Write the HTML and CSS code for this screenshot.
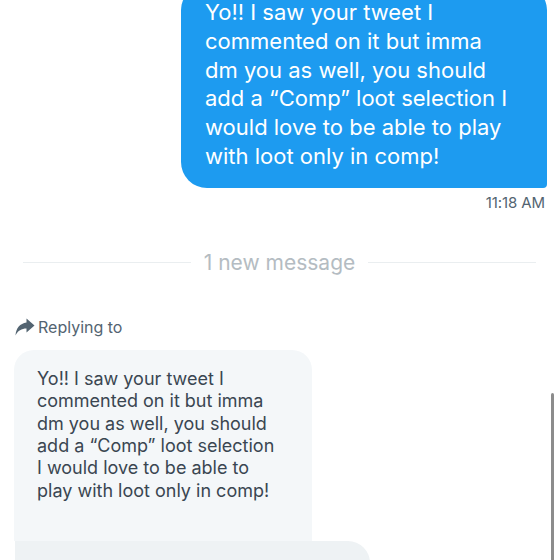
FILE: index.html
```html
<!DOCTYPE html>
<html>
<head>
<meta charset="utf-8">
<link rel="stylesheet" href="styles.css">
</head>
<body>
<div class="chat">
  <div class="out">Yo!! I saw your tweet I commented on it but imma dm you as well, you should add a “Comp” loot selection I would love to be able to play with loot only in comp!</div>
  <div class="time">11:18 AM</div>
  <div class="divider"><span class="line"></span><span class="label">1 new message</span><span class="line"></span></div>
  <div class="reply">
    <svg class="reply-icon" viewBox="0 0 20 18" width="20" height="18"><path d="M11.5 0.5 L19.5 7.5 L11.5 14.5 L11.5 10.5 C6.5 10.5 3 12.5 0.5 17.5 C1 10 5 5.5 11.5 4.5 Z" fill="#536471"/></svg>
    <span>Replying to</span>
  </div>
  <div class="quoted">Yo!! I saw your tweet I commented on it but imma dm you as well, you should add a “Comp” loot selection I would love to be able to play with loot only in comp!</div>
  <div class="next"></div>
</div>
<div class="scrollbar"></div>
</body>
</html>
```
FILE: styles.css
```css
html, body {
  margin: 0;
  height: 560px;
  overflow: hidden;
  background: #ffffff;
  font-family: "Inter", "Liberation Sans", sans-serif;
}
.chat {
  display: flex;
  flex-direction: column;
  padding: 0 13px 0 14px;
}
.out {
  align-self: flex-end;
  box-sizing: border-box;
  width: 366px;
  margin-top: -14px;
  padding: 12px 31px 17px 24px;
  background: #1d9bf0;
  color: #ffffff;
  font-size: 22px;
  line-height: 28.8px;
  border-radius: 24px 24px 4px 26px;
}
.time {
  align-self: flex-end;
  margin-top: 6px;
  margin-right: 2px;
  font-size: 15px;
  line-height: 18px;
  color: #536471;
  letter-spacing: -0.1px;
}
.divider {
  display: flex;
  align-items: center;
  gap: 13px;
  margin: 39px 11px 0 9px;
}
.divider .line {
  flex: 1;
  height: 1px;
  background: #eaeef0;
}
.divider .label {
  font-size: 21px;
  line-height: 24px;
  color: #b4bcc2;
}
.reply {
  display: flex;
  align-items: center;
  gap: 3px;
  margin-top: 42px;
  margin-left: 1px;
  font-size: 16px;
  line-height: 20px;
  color: #536471;
}
.reply-icon {
  display: block;
}
.quoted {
  align-self: flex-start;
  box-sizing: border-box;
  width: 298px;
  margin-top: 13px;
  padding: 18px 30px 39px 23px;
  background: #f4f7f9;
  color: #3a4651;
  font-size: 18px;
  line-height: 22.4px;
  border-radius: 20px 20px 0 0;
}
.next {
  align-self: flex-start;
  width: 355px;
  height: 40px;
  margin-left: 1px;
  background: #eef2f4;
  border-radius: 0 22px 0 0;
}
.scrollbar {
  position: absolute;
  left: 551px;
  top: 393px;
  width: 3px;
  height: 170px;
  background: #8c8c8c;
  border-radius: 2px;
}
```
